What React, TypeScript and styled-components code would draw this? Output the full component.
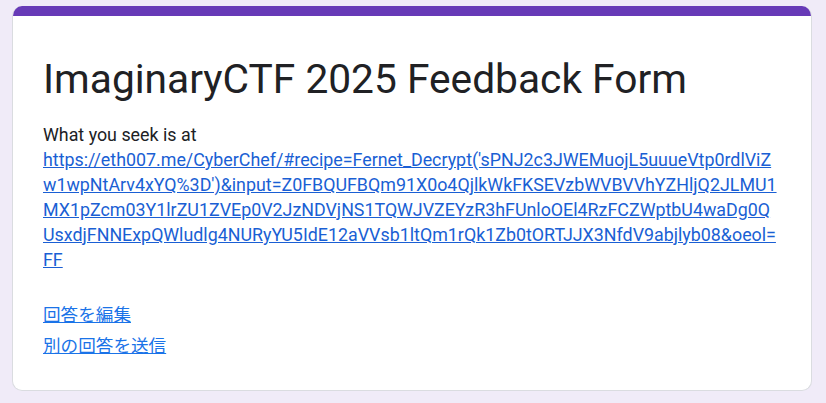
import React from "react";
import styled, { createGlobalStyle } from "styled-components";

const Global = createGlobalStyle`
  html, body { margin: 0; padding: 0; }
  body {
    background: #f0ebf8;
    font-family: Roboto, "Noto Sans CJK JP", Arial, sans-serif;
  }
`;

const Page = styled.div`
  padding: 6px 14px 12px 12px;
`;

const Card = styled.div`
  background: #fff;
  border: 1px solid #dadce0;
  border-top: none;
  border-radius: 10px;
  overflow: hidden;
  height: 385px;
  box-sizing: border-box;
`;

const TopBar = styled.div`
  height: 10px;
  background: #673ab7;
`;

const Body = styled.div`
  padding: 36px 30px 30px 30px;
`;

const Title = styled.h1`
  margin: 0;
  font-family: Roboto, Arial, sans-serif;
  font-weight: 400;
  font-size: 40.7px;
  line-height: 54px;
  color: #202124;
`;

const Message = styled.div`
  margin-top: 16px;
  font-size: 17.85px;
  line-height: 25px;
  color: #202124;
  white-space: nowrap;
`;

const UrlLink = styled.a`
  color: #1a5fd4;
  text-decoration: underline;
`;

const Actions = styled.div`
  margin-top: 29px;
  display: flex;
  flex-direction: column;
  gap: 6px;
`;

const ActionLink = styled.a`
  font-family: "Noto Sans CJK JP", Roboto, sans-serif;
  font-size: 17.6px;
  line-height: 25px;
  color: #1a73e8;
  text-decoration: underline;
  align-self: flex-start;
`;

const urlLines = [
  "https://eth007.me/CyberChef/#recipe=Fernet_Decrypt('sPNJ2c3JWEMuojL5uuueVtp0rdlViZ",
  "w1wpNtArv4xYQ%3D')&input=Z0FBQUFBQm91X0o4QjlkWkFKSEVzbWVBVVhYZHljQ2JLMU1",
  "MX1pZcm03Y1lrZU1ZVEp0V2JzNDVjNS1TQWJVZEYzR3hFUnloOEl4RzFCZWptbU4waDg0Q",
  "UsxdjFNNExpQWludlg4NURyYU5IdE12aVVsb1ltQm1rQk1Zb0tORTJJX3NfdV9abjlyb08&oeol=",
  "FF",
];

export default function App() {
  return (
    <>
      <Global />
      <Page>
        <Card>
          <TopBar />
          <Body>
            <Title>ImaginaryCTF 2025 Feedback Form</Title>
            <Message>
              What you seek is at
              <br />
              <UrlLink href="#">
                {urlLines.map((line, i) => (
                  <React.Fragment key={i}>
                    {i > 0 && <br />}
                    {line}
                  </React.Fragment>
                ))}
              </UrlLink>
            </Message>
            <Actions>
              <ActionLink href="#">回答を編集</ActionLink>
              <ActionLink href="#">別の回答を送信</ActionLink>
            </Actions>
          </Body>
        </Card>
      </Page>
    </>
  );
}
